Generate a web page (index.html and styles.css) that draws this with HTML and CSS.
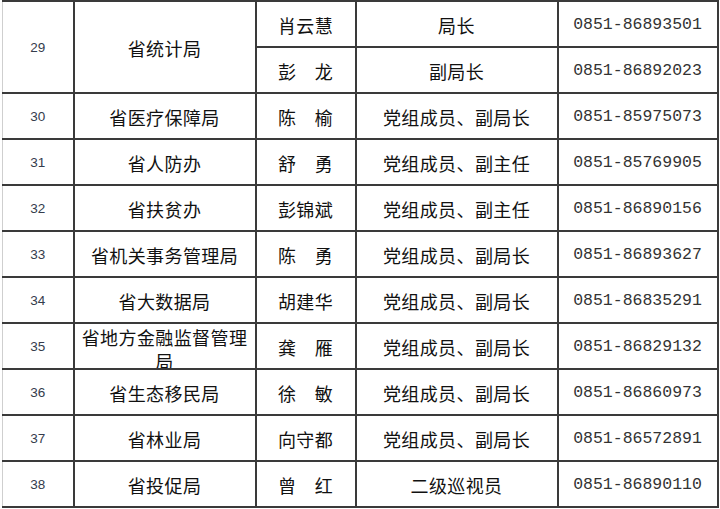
FILE: index.html
```html
<!DOCTYPE html>
<html lang="zh-CN">
<head>
<meta charset="utf-8">
<title>领导联系方式</title>
<link rel="stylesheet" href="styles.css">
</head>
<body>
<div class="sheet">
<table class="grid">
  <colgroup>
    <col class="c-num"><col class="c-org"><col class="c-name"><col class="c-title"><col class="c-phone">
  </colgroup>
  <tbody>
    <tr>
      <td class="num" rowspan="2"><div class="cell cell-tall">29</div></td>
      <td class="org" rowspan="2"><div class="cell cell-tall">省统计局</div></td>
      <td class="name"><div class="cell">肖云慧</div></td>
      <td class="title"><div class="cell">局长</div></td>
      <td class="phone"><div class="cell">0851-86893501</div></td>
    </tr>
    <tr>
      <td class="name"><div class="cell">彭　龙</div></td>
      <td class="title"><div class="cell">副局长</div></td>
      <td class="phone"><div class="cell">0851-86892023</div></td>
    </tr>
    <tr>
      <td class="num"><div class="cell">30</div></td>
      <td class="org"><div class="cell">省医疗保障局</div></td>
      <td class="name"><div class="cell">陈　榆</div></td>
      <td class="title"><div class="cell">党组成员、副局长</div></td>
      <td class="phone"><div class="cell">0851-85975073</div></td>
    </tr>
    <tr>
      <td class="num"><div class="cell">31</div></td>
      <td class="org"><div class="cell">省人防办</div></td>
      <td class="name"><div class="cell">舒　勇</div></td>
      <td class="title"><div class="cell">党组成员、副主任</div></td>
      <td class="phone"><div class="cell">0851-85769905</div></td>
    </tr>
    <tr>
      <td class="num"><div class="cell">32</div></td>
      <td class="org"><div class="cell">省扶贫办</div></td>
      <td class="name"><div class="cell">彭锦斌</div></td>
      <td class="title"><div class="cell">党组成员、副主任</div></td>
      <td class="phone"><div class="cell">0851-86890156</div></td>
    </tr>
    <tr>
      <td class="num"><div class="cell">33</div></td>
      <td class="org"><div class="cell">省机关事务管理局</div></td>
      <td class="name"><div class="cell">陈　勇</div></td>
      <td class="title"><div class="cell">党组成员、副局长</div></td>
      <td class="phone"><div class="cell">0851-86893627</div></td>
    </tr>
    <tr>
      <td class="num"><div class="cell">34</div></td>
      <td class="org"><div class="cell">省大数据局</div></td>
      <td class="name"><div class="cell">胡建华</div></td>
      <td class="title"><div class="cell">党组成员、副局长</div></td>
      <td class="phone"><div class="cell">0851-86835291</div></td>
    </tr>
    <tr>
      <td class="num"><div class="cell">35</div></td>
      <td class="org"><div class="cell cell-top">省地方金融监督管理局</div></td>
      <td class="name"><div class="cell">龚　雁</div></td>
      <td class="title"><div class="cell">党组成员、副局长</div></td>
      <td class="phone"><div class="cell">0851-86829132</div></td>
    </tr>
    <tr>
      <td class="num"><div class="cell">36</div></td>
      <td class="org"><div class="cell">省生态移民局</div></td>
      <td class="name"><div class="cell">徐　敏</div></td>
      <td class="title"><div class="cell">党组成员、副局长</div></td>
      <td class="phone"><div class="cell">0851-86860973</div></td>
    </tr>
    <tr>
      <td class="num"><div class="cell">37</div></td>
      <td class="org"><div class="cell">省林业局</div></td>
      <td class="name"><div class="cell">向守都</div></td>
      <td class="title"><div class="cell">党组成员、副局长</div></td>
      <td class="phone"><div class="cell">0851-86572891</div></td>
    </tr>
    <tr>
      <td class="num"><div class="cell">38</div></td>
      <td class="org"><div class="cell">省投促局</div></td>
      <td class="name"><div class="cell">曾　红</div></td>
      <td class="title"><div class="cell">二级巡视员</div></td>
      <td class="phone"><div class="cell">0851-86890110</div></td>
    </tr>
  </tbody>
</table>
</div>
</body>
</html>
```

FILE: styles.css
```css
html, body {
  margin: 0;
  padding: 0;
  background: #ffffff;
}

.sheet {
  display: inline-block;
  padding-left: 2px;
  padding-right: 1px;
  padding-bottom: 1px;
  border-right: 1px solid #d8d8d8;
  border-bottom: 1px solid #d8d8d8;
}

.grid {
  border-collapse: collapse;
  table-layout: fixed;
  width: 715px;
  font-family: "Noto Sans CJK SC", "Liberation Sans", sans-serif;
  font-size: 18px;
  color: #111111;
}

.c-num { width: 71px; }
.c-org { width: 182px; }
.c-name { width: 100px; }
.c-title { width: 202px; }
.c-phone { width: 160px; }

.grid td {
  border: 2px solid #3a3a3a;
  padding: 0;
  height: 44px;
  text-align: center;
  vertical-align: middle;
}

.grid td.num {
  border-left: 1px solid #cfcfcf;
  font-family: "Liberation Sans", sans-serif;
  font-size: 13.5px;
  color: #353c4c;
}

.cell {
  box-sizing: border-box;
  height: 44px;
  padding-top: 2px;
  overflow: hidden;
  display: flex;
  align-items: center;
  justify-content: center;
  line-height: 24px;
  letter-spacing: 0.4px;
}

.cell-tall {
  height: 90px;
}

.cell-top {
  align-items: flex-start;
  padding-top: 1px;
}

.org .cell {
  padding-left: 4px;
  padding-right: 4px;
}

.num .cell {
  letter-spacing: 0;
}

.phone .cell {
  font-family: "Liberation Mono", monospace;
  font-size: 16.5px;
  letter-spacing: 0;
  color: #333333;
}
```
